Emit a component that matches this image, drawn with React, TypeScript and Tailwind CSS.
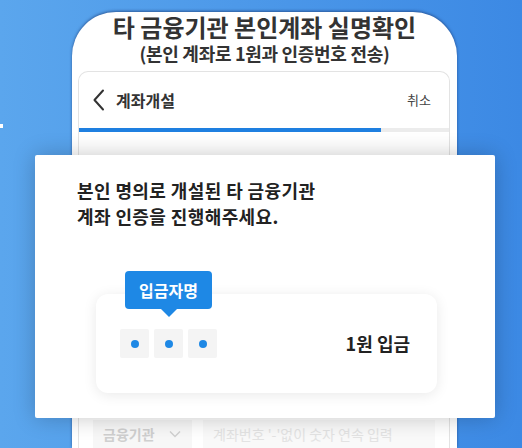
const font = { fontFamily: '"Noto Sans CJK KR", "Noto Sans", sans-serif' }

const BackIcon = () => (
  <svg width='14' height='22' viewBox='0 0 14 22' fill='none'>
    <path d='M11 1.5 L2.5 11 L11 20.5' stroke='#333' strokeWidth='2' strokeLinecap='round' strokeLinejoin='round' />
  </svg>
)

const ChevronDown = () => (
  <svg width='12' height='8' viewBox='0 0 12 8' fill='none'>
    <path d='M1 1.5 L6 6.5 L11 1.5' stroke='#d0d0d0' strokeWidth='1.4' />
  </svg>
)

const Dot = () => (
  <div className='w-[29px] h-[29px] bg-[#f4f4f4] rounded-[2px] flex items-center justify-center'>
    <div className='w-[8px] h-[8px] rounded-full bg-[#1e88e5]' />
  </div>
)

const App = () => {
  return (
    <div
      className='relative w-[522px] h-[448px] overflow-hidden bg-gradient-to-r from-[#5ba6ed] to-[#3c89e4]'
      style={font}
    >
      <div className='absolute left-0 top-[124px] w-[3px] h-[4px] bg-white' />

      {/* phone frame */}
      <div className='ml-[72px] mt-[12px] w-[385px] h-[436px] bg-white rounded-t-[44px] shadow-[0_-1px_3px_rgba(20,45,100,0.6)] flex flex-col'>
        <div className='text-center'>
          <div className='text-[24px] leading-[30px] font-bold text-[#333]'>타 금융기관 본인계좌 실명확인</div>
          <div className='text-[18px] leading-[22px] font-bold text-[#333] tracking-[-0.3px]'>(본인 계좌로 1원과 인증번호 전송)</div>
        </div>

        <div className='mt-[7px] ml-[6px] w-[372px] flex-1 border border-b-0 border-[#e3e3e3] rounded-t-[10px] flex flex-col'>
          <div className='h-[56px] flex items-center justify-between pl-[13px] pr-[18px]'>
            <div className='flex items-center gap-[10px]'>
              <BackIcon />
              <span className='text-[16px] font-semibold text-[#333]'>계좌개설</span>
            </div>
            <span className='text-[13px] text-[#444]'>취소</span>
          </div>
          <div className='h-[4px] bg-[#ececec]'>
            <div className='h-full w-[302px] bg-[#1e7fe0]' />
          </div>
          <div className='flex-1' />
          <div className='flex gap-[11px] px-[14px] h-[28px]'>
            <div className='w-[99px] bg-[#f7f7f7] flex items-center gap-[14px] pl-[10px] text-[14px] font-semibold text-[#cfcfcf]'>
              금융기관
              <ChevronDown />
            </div>
            <div className='flex-1 bg-[#f9f9f9] flex items-center pl-[10px] text-[14px] text-[#e3e3e3]'>
              계좌번호 '-'없이 숫자 연속 입력
            </div>
          </div>
        </div>
      </div>

      {/* overlay card */}
      <div className='absolute left-[35px] top-[155px] w-[460px] h-[263px] bg-white rounded-[2px] shadow-[0_0_22px_rgba(0,0,0,0.22)] pl-[42px] pt-[22px]'>
        <p className='text-[18px] leading-[26px] font-semibold text-[#222] tracking-[0.4px]'>
          본인 명의로 개설된 타 금융기관<br />계좌 인증을 진행해주세요.
        </p>

        <div className='relative mt-[65px] ml-[19px] w-[341px] h-[99px] bg-white rounded-[12px] shadow-[0_2px_14px_rgba(0,0,0,0.09)] flex items-start justify-between pl-[24px] pr-[27px] pt-[35px]'>
          <div className='absolute left-[29px] top-[-23px] flex flex-col items-center'>
            <div className='w-[87px] h-[38px] bg-[#1e88e5] rounded-[4px] flex items-center justify-center text-white text-[16px] font-semibold'>
              입금자명
            </div>
            <div className='w-0 h-0 border-l-[8px] border-r-[8px] border-t-[8px] border-l-transparent border-r-transparent border-t-[#1e88e5]' />
          </div>
          <div className='flex gap-[5px]'>
            <Dot />
            <Dot />
            <Dot />
          </div>
          <span className='text-[18px] leading-[29px] font-bold text-[#222]'>1원 입금</span>
        </div>
      </div>
    </div>
  )
}

export default App
